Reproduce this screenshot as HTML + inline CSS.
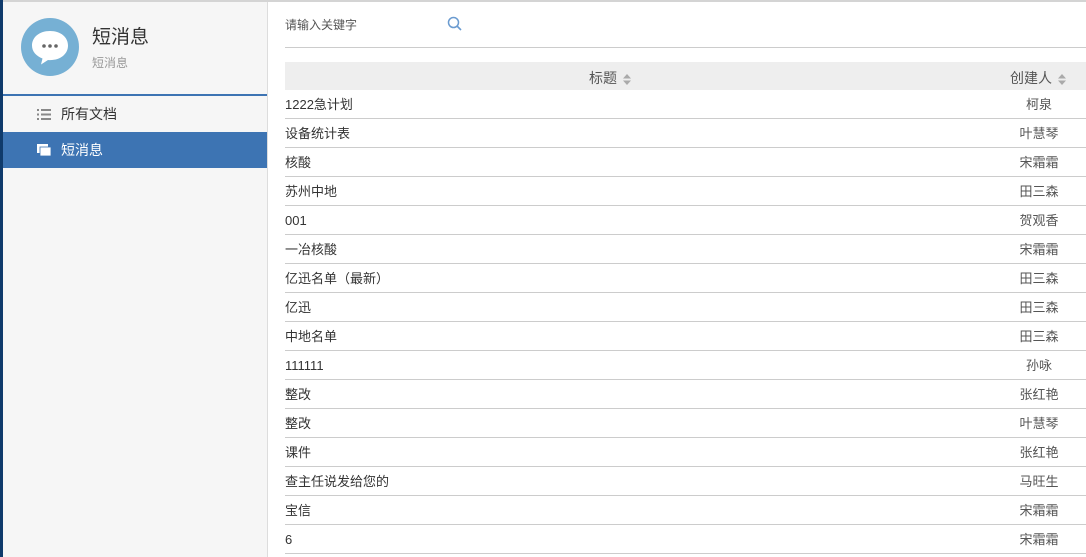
<!DOCTYPE html>
<html><head><meta charset="utf-8"><style>
*{margin:0;padding:0;box-sizing:border-box}
body{width:1086px;height:557px;overflow:hidden;background:#fff;font-family:"Liberation Sans","Noto Sans CJK SC",sans-serif;position:relative;color:#333}
.strip{position:absolute;left:0;top:0;width:3px;height:557px;background:#0f3a6b}
.topl{position:absolute;left:3px;top:0;right:0;height:2px;background:#d4d4d4}
.side{position:absolute;left:3px;top:2px;width:265px;height:555px;background:#f6f6f6;border-right:1px solid #ddd}
.av{position:absolute;left:18px;top:16px;width:58px;height:58px;border-radius:50%;background:#76b0d4}
.t1{position:absolute;left:89px;top:20px;font-size:19px;color:#333}
.t2{position:absolute;left:89px;top:52px;font-size:12px;color:#999}
.bl{position:absolute;left:0;top:92px;width:264px;height:2px;background:#3d74b3}
.m{position:absolute;left:0;width:264px;height:36px;font-size:14px;line-height:36px;padding-left:58px}
.m1{top:94px;color:#333}
.m2{top:130px;background:#3d74b3;color:#fff}
.srch{position:absolute;left:285px;top:16px;font-size:12px;color:#555}
.sl{position:absolute;left:285px;top:47px;right:0;height:1px;background:#ccc}
.hd{position:absolute;left:285px;top:62px;right:0;height:28px;background:#eee;font-size:14px;color:#555}
.row{position:absolute;left:285px;right:0;height:29px;border-bottom:1px solid #ccc;font-size:13px;line-height:30px;color:#333}
.row .c{position:absolute;right:3px;width:88px;text-align:center;color:#555}
.arr{display:inline-block;vertical-align:middle;margin-left:5px}
</style></head><body>
<div class="strip"></div><div class="topl"></div>
<div class="side">
<div class="av"><svg width="58" height="58" viewBox="0 0 58 58"><path d="M29 13c-11 0-18 6.5-18 14.5 0 6 4.2 10.5 10.5 13l-1.5 6 7-4.5c.7.05 1.3.1 2 .1 11 0 18-6.5 18-14.6S40 13 29 13z" fill="#fff"/><circle cx="23" cy="28" r="1.8" fill="#666"/><circle cx="29" cy="28" r="1.8" fill="#666"/><circle cx="35" cy="28" r="1.8" fill="#666"/></svg></div>
<div class="t1">短消息</div>
<div class="t2">短消息</div>
<div class="bl"></div>
<div class="m m1"><svg style="position:absolute;left:34px;top:13px" width="14" height="11"><g fill="#888"><rect x="0" y="0" width="2" height="2"/><rect x="4" y="0" width="10" height="2"/><rect x="0" y="4.5" width="2" height="2"/><rect x="4" y="4.5" width="10" height="2"/><rect x="0" y="9" width="2" height="2"/><rect x="4" y="9" width="10" height="2"/></g></svg>所有文档</div>
<div class="m m2"><svg style="position:absolute;left:34px;top:12px" width="14" height="12"><rect x="0" y="0" width="11" height="9" fill="#fff"/><rect x="3" y="3" width="11" height="9" fill="#fff" stroke="#3d74b3" stroke-width="0.8"/></svg>短消息</div>
</div>
<div class="srch">请输入关键字</div>
<svg style="position:absolute;left:447px;top:16px" width="16" height="16"><circle cx="6.5" cy="6.5" r="5" fill="none" stroke="#6a9bd0" stroke-width="1.5"/><line x1="10" y1="10" x2="14" y2="14" stroke="#6a9bd0" stroke-width="1.6"/></svg>
<div class="sl"></div>
<div class="hd"><span style="position:absolute;left:304px;top:6px">标题<svg class="arr" width="10" height="13"><path d="M5 1L9 5.5H1z M5 12L9 7.5H1z" fill="#aaa"/></svg></span><span style="position:absolute;left:725px;top:6px">创建人<svg class="arr" width="10" height="13"><path d="M5 1L9 5.5H1z M5 12L9 7.5H1z" fill="#aaa"/></svg></span></div>
<div class="row" style="top:90px">1222急计划<span class="c">柯泉</span></div>
<div class="row" style="top:119px">设备统计表<span class="c">叶慧琴</span></div>
<div class="row" style="top:148px">核酸<span class="c">宋霜霜</span></div>
<div class="row" style="top:177px">苏州中地<span class="c">田三森</span></div>
<div class="row" style="top:206px">001<span class="c">贺观香</span></div>
<div class="row" style="top:235px">一冶核酸<span class="c">宋霜霜</span></div>
<div class="row" style="top:264px">亿迅名单（最新）<span class="c">田三森</span></div>
<div class="row" style="top:293px">亿迅<span class="c">田三森</span></div>
<div class="row" style="top:322px">中地名单<span class="c">田三森</span></div>
<div class="row" style="top:351px">111111<span class="c">孙咏</span></div>
<div class="row" style="top:380px">整改<span class="c">张红艳</span></div>
<div class="row" style="top:409px">整改<span class="c">叶慧琴</span></div>
<div class="row" style="top:438px">课件<span class="c">张红艳</span></div>
<div class="row" style="top:467px">查主任说发给您的<span class="c">马旺生</span></div>
<div class="row" style="top:496px">宝信<span class="c">宋霜霜</span></div>
<div class="row" style="top:525px">6<span class="c">宋霜霜</span></div>
</body></html>
